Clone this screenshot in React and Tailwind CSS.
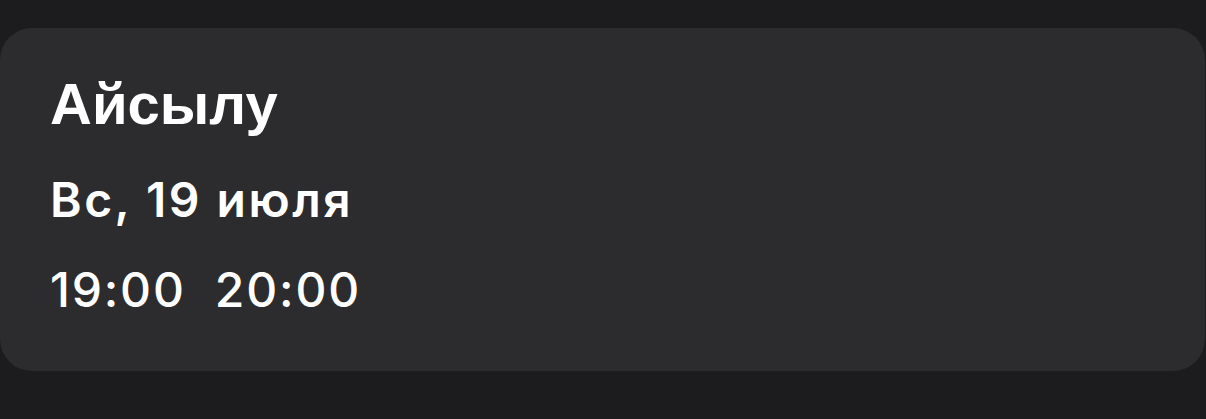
export default function App() {
  return (
    <div className="w-[1206px] h-[419px] bg-[#1c1c1e] pt-[28px] overflow-hidden">
      <div className="mr-[1px] rounded-[32px] bg-[#2c2c2e] pl-[50px] pt-[47px] pb-[57px] text-white">
        <div className="text-[58px] leading-[58px] font-bold font-['Liberation_Sans',Arial,sans-serif]">
          Айсылу
        </div>
        <div className="mt-[43px] text-[48px] leading-[48px] font-semibold tracking-[2.5px] font-['Inter',sans-serif]">
          Вс, 19 июля
        </div>
        <div className="mt-[42px] text-[48px] leading-[48px] font-medium tracking-[1.8px] font-['Inter',sans-serif] whitespace-pre">
          19:00  20:00
        </div>
      </div>
    </div>
  );
}
